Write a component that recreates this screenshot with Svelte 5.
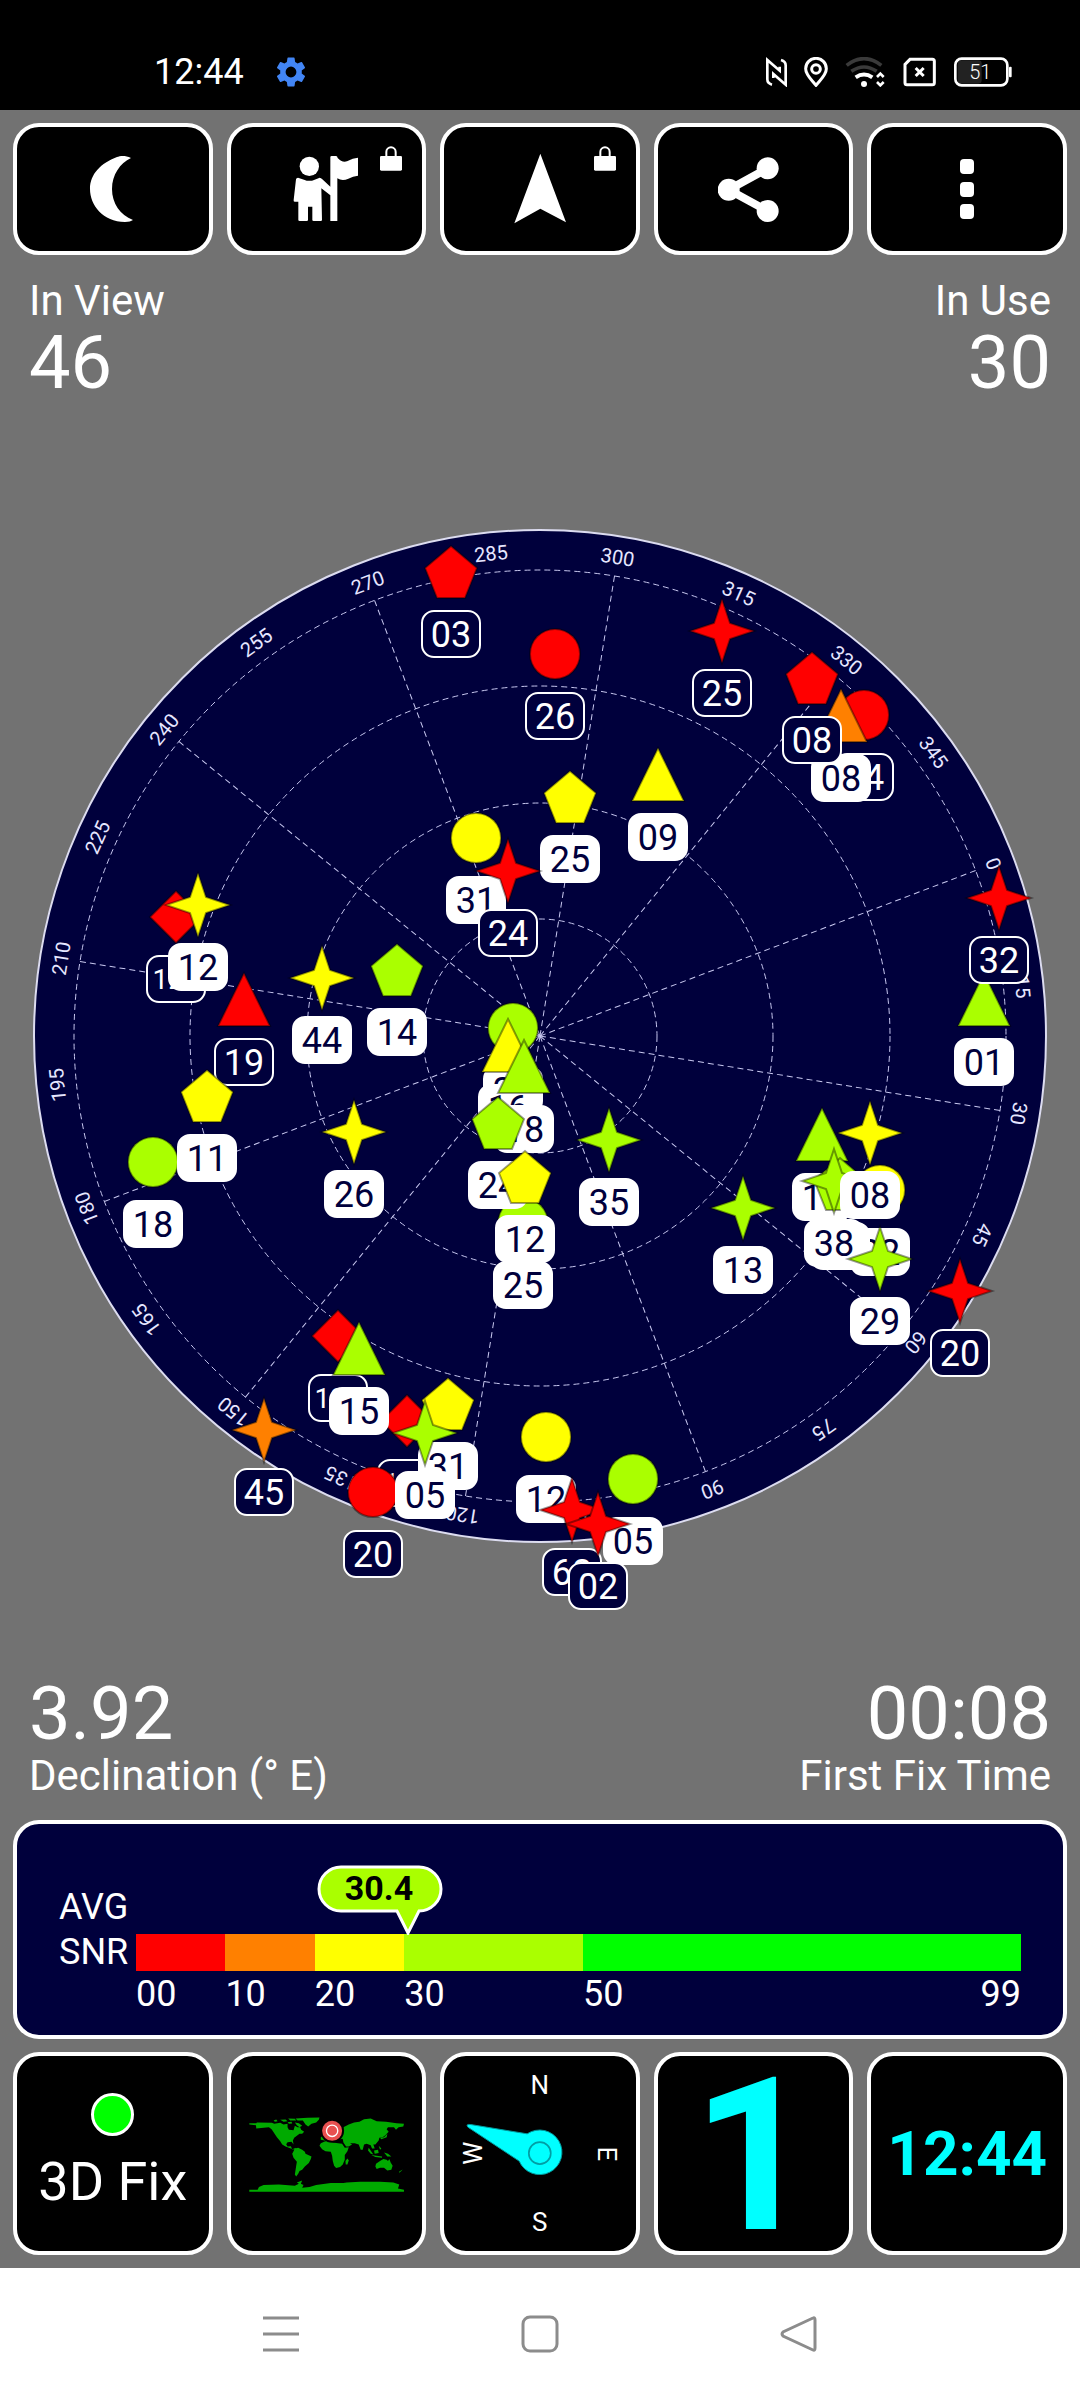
<script lang="ts">
  type Shape = 'circle' | 'triangle' | 'pentagon' | 'star' | 'diamond'
  type Satellite = { id: string; shape: Shape; color: string; x: number; y: number; used: boolean }

  const RED = '#ff0000'
  const ORANGE = '#ff8000'
  const YELLOW = '#ffff00'
  const LIME = '#aaff00'
  const GREEN = '#00ff00'

  // compass heading offset of the sky plot, degrees
  const heading = 69.2
  const ringRadii = [117, 233, 350, 466]
  const spokes = Array.from({ length: 12 }, (_, i) => i * 30)
  const azimuths = Array.from({ length: 24 }, (_, i) => i * 15)

  const points: Record<string, string> = {
    triangle: '0,-27 26,26 -26,26',
    pentagon: '0,-26 26,-4 14,26 -14,26 -26,-4',
    star: '0,-32 8,-8 32,0 8,8 0,32 -8,8 -32,0 -8,-8',
    diamond: '0,-26 26,0 0,26 -26,0'
  }

  function sat(id: string, shape: Shape, color: string, x: number, y: number, used = true): Satellite {
    return { id, shape, color, x, y, used }
  }

  // later satellites are drawn over earlier ones
  const satellites: Satellite[] = [
    sat('03', 'pentagon', RED, -89, -464, false),
    sat('26', 'circle', RED, 15, -382, false),
    sat('25', 'star', RED, 182, -405, false),
    sat('14', 'circle', RED, 324, -321, false),
    sat('08', 'triangle', ORANGE, 301, -320),
    sat('08', 'pentagon', RED, 272, -358, false),
    sat('25', 'pentagon', YELLOW, 30, -239),
    sat('09', 'triangle', YELLOW, 118, -261),
    sat('31', 'circle', YELLOW, -64, -198),
    sat('24', 'star', RED, -32, -165, false),
    sat('01', 'triangle', LIME, 444, -36),
    sat('32', 'star', RED, 459, -138, false),
    sat('14', 'pentagon', LIME, -143, -66),
    sat('44', 'star', YELLOW, -218, -58),
    sat('123', 'diamond', RED, -364, -119, false),
    sat('12', 'star', YELLOW, -342, -131),
    sat('19', 'triangle', RED, -296, -36, false),
    sat('18', 'circle', LIME, -387, 126),
    sat('11', 'pentagon', YELLOW, -333, 60),
    sat('26', 'star', YELLOW, -186, 96),
    sat('29', 'circle', LIME, -27, -8),
    sat('16', 'triangle', YELLOW, -32, 10),
    sat('18', 'triangle', LIME, -16, 31),
    sat('25', 'circle', LIME, -17, 187),
    sat('24', 'pentagon', LIME, -42, 87),
    sat('12', 'pentagon', YELLOW, -15, 141),
    sat('35', 'star', LIME, 69, 104),
    sat('13', 'star', LIME, 203, 172),
    sat('15', 'triangle', LIME, 282, 99),
    sat('22', 'circle', YELLOW, 340, 154),
    sat('33', 'pentagon', LIME, 300, 148),
    sat('38', 'star', LIME, 294, 145),
    sat('08', 'star', YELLOW, 330, 97),
    sat('29', 'star', LIME, 340, 223),
    sat('20', 'star', RED, 420, 255, false),
    sat('136', 'diamond', RED, -133, 385, false),
    sat('126', 'diamond', RED, -202, 300, false),
    sat('15', 'triangle', LIME, -181, 313),
    sat('31', 'pentagon', YELLOW, -92, 368),
    sat('20', 'circle', RED, -167, 456, false),
    sat('05', 'star', LIME, -115, 397),
    sat('45', 'star', ORANGE, -276, 394, false),
    sat('12', 'circle', YELLOW, 6, 401),
    sat('05', 'circle', LIME, 93, 443),
    sat('68', 'star', RED, 32, 474, false),
    sat('02', 'star', RED, 58, 488, false)
  ]

  const snrMax = 99
  const avgSnr = 30.4
  const bands = [
    { from: 0, to: 10, color: RED },
    { from: 10, to: 20, color: ORANGE },
    { from: 20, to: 30, color: YELLOW },
    { from: 30, to: 50, color: LIME },
    { from: 50, to: 99, color: GREEN }
  ]

  const pad = (n: number) => String(n).padStart(2, '0')

  let clock = $state('12:44')
</script>

{#snippet lock()}
  <svg class="lock" viewBox="303 48 66 75" aria-hidden="true">
    <path d="M322 80V66a14 14 0 0 1 28 0V80" fill="none" stroke="#fff" stroke-width="6" />
    <rect x="303" y="78" width="66" height="44" rx="4" fill="#fff" />
  </svg>
{/snippet}

<div class="screen">
  <header class="status">
    <time>{clock}</time>
    <svg class="gear" viewBox="2 2 20 20" aria-hidden="true">
      <path fill="#4285f4" d="M19.14 12.94c.04-.3.06-.61.06-.94 0-.32-.02-.64-.07-.94l2.03-1.58a.49.49 0 0 0 .12-.61l-1.92-3.32a.49.49 0 0 0-.59-.22l-2.39.96c-.5-.38-1.03-.7-1.62-.94L14.4 2.81a.48.48 0 0 0-.48-.41h-3.84a.47.47 0 0 0-.47.41l-.36 2.54c-.59.24-1.13.57-1.62.94l-2.39-.96a.48.48 0 0 0-.59.22L2.74 8.87a.47.47 0 0 0 .12.61l2.03 1.58c-.05.3-.09.63-.09.94s.02.64.07.94l-2.03 1.58a.49.49 0 0 0-.12.61l1.92 3.32c.12.22.37.29.59.22l2.39-.96c.5.38 1.03.7 1.62.94l.36 2.54c.05.24.24.41.48.41h3.84c.24 0 .44-.17.47-.41l.36-2.54c.59-.24 1.13-.56 1.62-.94l2.39.96c.22.08.47 0 .59-.22l1.92-3.32a.47.47 0 0 0-.12-.61l-2.01-1.58zM12 15.6A3.6 3.6 0 1 1 12 8.4a3.6 3.6 0 0 1 0 7.2z" />
    </svg>
    <div class="indicators">
      <svg width="22" height="30" viewBox="75 51 66 90" aria-hidden="true">
        <path d="M96 134Q82 130 82 118V60L119 92V80M123 60Q137 64 137 76V134L100 102V114" fill="none" stroke="#fff" stroke-width="8" />
      </svg>
      <svg width="24" height="30" viewBox="195 51 72 90" aria-hidden="true">
        <path d="M231 136C216 117 200 104 200 86a31 31 0 0 1 62 0C262 104 246 117 231 136Z" fill="none" stroke="#fff" stroke-width="9" />
        <circle cx="231" cy="87" r="13" fill="none" stroke="#fff" stroke-width="9" />
      </svg>
      <svg width="41" height="30" viewBox="327 51 123 90" aria-hidden="true">
        <path d="M332 76Q384 36 436 76M346 94Q384 68 422 94" fill="none" stroke="#3a3a3a" stroke-width="11" />
        <path d="M359 112Q384 95 409 112" fill="none" stroke="#fff" stroke-width="12" />
        <circle cx="384" cy="132" r="9" fill="#fff" />
        <path d="M423 111L433 101L443 111M423 126L433 136L443 126" fill="none" stroke="#fff" stroke-width="8" />
      </svg>
      <svg width="33" height="30" viewBox="490 51 99 90" aria-hidden="true">
        <path d="M511 58H578Q584 58 584 64V128Q584 134 578 134H502Q496 134 496 128V73Z" fill="none" stroke="#fff" stroke-width="9" />
        <path d="M528 84L552 108M552 84L528 108" stroke="#fff" stroke-width="9" />
      </svg>
      <svg width="59" height="30" viewBox="636 51 177 90" role="img" aria-label="Battery">
        <rect x="650" y="61" width="72" height="70" rx="10" fill="#222" />
        <rect x="643" y="56" width="156" height="80" rx="19" fill="none" stroke="#fff" stroke-width="8" />
        <rect x="804" y="80" width="8" height="32" rx="3" fill="#fff" />
        <text class="battery" x="718" y="117">51</text>
      </svg>
    </div>
  </header>

  <main>
    <nav class="tiles toolbar">
      <button class="tile" aria-label="Night mode">
        <svg class="icon" viewBox="0 0 72 72">
          <path d="M54 5C48 2 43 3 40 4C24 10 13 21 13 36C13 52 26 69 48 69C52 69 54 68 56 67C43 62 35 50 35 36C35 22 43 10 54 5Z" />
        </svg>
      </button>
      <button class="tile" aria-label="Waypoints">
        <svg class="icon" viewBox="33 69 216 216">
          <circle cx="91" cy="109" r="29" />
          <path d="M57 143L75 149Q91 156 107 149L122 143Q126 143 130 148L154 170V82Q154 78 158 78H171Q175 78 176 84Q188 98 204 94Q222 84 237 83V137Q222 138 208 146Q190 154 175 145V273H154V196L127 175L129 270Q129 273 125 273H104Q100 273 100 270V230H87V270Q87 273 83 273H62Q58 273 58 270V215H47Q43 215 44 210L51 148Q52 143 57 143Z" />
        </svg>
        {@render lock()}
      </button>
      <button class="tile" aria-label="Navigate">
        <svg class="icon" viewBox="672 69 216 216">
          <path d="M781 71L858 277L781 236L703 280Z" />
        </svg>
        {@render lock()}
      </button>
      <button class="tile" aria-label="Share">
        <svg class="icon" viewBox="1312 69 216 216">
          <circle cx="1344" cy="179" r="33" />
          <circle cx="1461" cy="115" r="33" />
          <circle cx="1461" cy="243" r="33" />
          <path d="M1461 115L1344 179L1461 243" fill="none" stroke="#fff" stroke-width="24" />
        </svg>
      </button>
      <button class="tile" aria-label="More options">
        <svg class="icon" viewBox="0 0 72 72">
          <rect x="29" y="6" width="14" height="15" rx="4" />
          <rect x="29" y="29" width="14" height="15" rx="4" />
          <rect x="29" y="51" width="14" height="15" rx="4" />
        </svg>
      </button>
    </nav>

    <dl class="stats">
      <div>
        <dt>In View</dt>
        <dd>46</dd>
      </div>
      <div>
        <dt>In Use</dt>
        <dd>30</dd>
      </div>
    </dl>

    <svg class="sky" viewBox="-540 -636 1080 1277" role="img" aria-label="Satellite sky plot">
      <circle r="506" fill="#00003c" stroke="#dcdcf0" stroke-width="2" />
      <g class="grid">
        {#each ringRadii as r}
          <circle {r} />
        {/each}
        {#each spokes as angle}
          <line x1="0" y1="0" x2="0" y2="-466" transform="rotate({angle + heading})" />
        {/each}
      </g>
      {#each azimuths as angle}
        <text class="azimuth" y="-478" transform="rotate({angle + heading})">{angle}</text>
      {/each}
      {#each satellites as s}
        <g class="sat" class:used={s.used} transform="translate({s.x} {s.y})">
          {#if s.shape === 'circle'}
            <circle class="mark" r="25" fill={s.color} />
          {:else}
            <polygon class="mark" points={points[s.shape]} fill={s.color} />
          {/if}
          <rect class="plate" x="-29" y="39" width="58" height="46" rx="12" />
          <text class="id" class:long={s.id.length > 2} y={s.id.length > 2 ? 72 : 75}>{s.id}</text>
        </g>
      {/each}
    </svg>

    <dl class="stats below">
      <div>
        <dt>Declination (° E)</dt>
        <dd>3.92</dd>
      </div>
      <div>
        <dt>First Fix Time</dt>
        <dd>00:08</dd>
      </div>
    </dl>

    <section class="snr">
      <div class="snr-label">AVG<br />SNR</div>
      <div class="scale">
        <div class="bands">
          {#each bands as band}
            <div class="band" style="flex-grow: {band.to - band.from}; background: {band.color}"></div>
          {/each}
        </div>
        <div class="ticks">
          {#each bands as band}
            <div class="tick" style="flex-grow: {band.to - band.from}">
              <span>{pad(band.from)}</span>
              {#if band.to === snrMax}<span>{band.to}</span>{/if}
            </div>
          {/each}
        </div>
        <div class="bubble" style="left: {(avgSnr / snrMax) * 100}%">
          <svg viewBox="0 0 126 70" aria-hidden="true">
            <path d="M24 2H102A22 22 0 0 1 102 46L91 68L80 46H24A22 22 0 0 1 24 2Z" fill="#aaff00" stroke="#fff" stroke-width="3" />
            <text x="62" y="35">{avgSnr}</text>
          </svg>
        </div>
      </div>
    </section>

    <nav class="tiles dashboard">
      <button class="tile fix">
        <span class="led"></span>
        3D Fix
      </button>
      <button class="tile" aria-label="World map">
        <svg viewBox="92 18 576 585">
          <g fill="#00aa00">
            <path d="M147 220H168L170 218L215 219L222 222L240 219L250 224L262 222L262 232L266 240L280 241L284 228L292 232L300 232L303 240L312 246L306 252L298 252L290 258L282 264L278 272L280 284L274 276L262 277L258 283L262 290L272 289L276 298L288 294L284 300L272 296L256 290L246 284L240 274L230 262L222 250L214 238L206 232L190 234L168 236L167 226L147 224Z" />
            <path d="M284 296L294 294L306 300L314 306L316 312L334 320L332 328L326 340L314 350L306 360L298 364L294 372L288 380L284 374L288 348L290 336L280 324L276 312L280 304Z" />
            <path d="M286 206L322 204L358 203L356 210L348 218L334 222L324 230L316 224L308 212L292 212Z" />
            <path d="M220 212L228 209L232 214L224 216ZM240 210L256 209L262 214L250 216ZM264 206L284 207L288 212L270 212ZM284 218L296 220L306 228L298 232L290 226ZM262 217L274 216L276 221L266 222Z" />
            <path d="M372 276L384 272L392 270L398 278L414 280L426 282L434 294L446 292L442 304L434 316L434 330L428 344L420 352L408 355L402 348L398 334L396 318L392 306L376 304L366 298L358 288L362 280Z" />
            <path d="M442 326L446 332L442 344L437 344L436 334Z" />
            <path d="M430 232L446 224L462 218L478 216L492 208L512 206L530 214L558 216L590 220L612 222L610 230L596 232L588 240L582 232L564 232L560 238L566 246L556 256L548 262L538 264L536 272L526 284L520 284L524 296L516 296L512 286L500 282L492 284L488 300L482 300L476 284L464 280L450 280L456 284L446 290L438 290L430 278L428 268L424 262Z" />
            <path d="M362 262L374 254L380 246L396 246L420 246L430 252L430 266L414 270L398 268L388 266L374 272L362 270Z" />
            <path d="M506 294L516 308L520 314L512 312L504 302ZM522 302L534 300L536 310L524 312ZM536 288L544 296L540 300ZM514 316L530 318L546 320V324L526 322ZM552 308L564 312L574 320L562 320ZM540 264L552 262L562 252L560 262L544 268Z" />
            <path d="M528 342L540 334L550 328L560 330L564 334L568 328L572 338L578 348L574 360L562 362L552 354L540 354L530 358L526 350Z" />
            <path d="M597 366L608 359L604 364L598 369Z" />
            <path d="M147 420H172L176 412L190 406L236 404L284 408L296 402L290 398L306 392L302 402L310 406L306 414L328 412L348 406L392 400L430 400L440 398L480 396L540 396L580 398L598 404L594 416L612 420V426H147Z" />
          </g>
          <circle cx="396" cy="243" r="36" fill="#000" />
          <circle cx="396" cy="243" r="30" fill="#e85050" />
          <circle cx="396" cy="243" r="17" fill="none" stroke="#fff" stroke-width="4" />
        </svg>
      </button>
      <button class="tile" aria-label="Compass">
        <svg viewBox="732 18 576 585">
          <path d="M982 252L812 224Q796 222 804 232L958 334A67 67 0 1 0 982 252Z" fill="#00ffff" stroke="#00999c" stroke-width="3" />
          <circle cx="1020" cy="310" r="33" fill="none" stroke="#009ea4" stroke-width="5" />
          <text class="cardinal" x="1020" y="133">N</text>
          <text class="cardinal" x="1020" y="543">S</text>
          <text class="cardinal" transform="translate(1194 312) rotate(90)">E</text>
          <text class="cardinal" transform="translate(846 310) rotate(-90)">W</text>
        </svg>
      </button>
      <button class="tile speed">1</button>
      <button class="tile clock">{clock}</button>
    </nav>
  </main>

  <footer class="system">
    <button aria-label="Recent apps">
      <svg viewBox="0 0 36 36"><path d="M0 2H36M0 18H36M0 34H36" /></svg>
    </button>
    <button aria-label="Home">
      <svg viewBox="0 0 36 36"><rect x="1" y="1" width="34" height="34" rx="7" /></svg>
    </button>
    <button aria-label="Back">
      <svg viewBox="0 0 36 36"><path d="M32 2Q34 1 34 4V32Q34 35 32 34L2 20Q0 18 2 16Z" /></svg>
    </button>
  </footer>
</div>

<style>
  :global(body) {
    margin: 0;
    background: #fff;
  }

  .screen {
    font-family: Roboto, 'Liberation Sans', sans-serif;
    color: #fff;
    background: #727272;
  }

  button {
    margin: 0;
    padding: 0;
    font: inherit;
    color: inherit;
    cursor: pointer;
  }

  svg {
    display: block;
  }

  .status {
    display: flex;
    align-items: center;
    box-sizing: border-box;
    height: 110px;
    padding: 34px 68px 0 154px;
    background: #000;
    font-size: 36px;
  }

  .gear {
    width: 30px;
    height: 30px;
    margin-left: 32px;
  }

  .indicators {
    display: flex;
    gap: 17px;
    margin-left: auto;
  }

  .battery {
    font-size: 60px;
    font-weight: 300;
    fill: #fff;
    text-anchor: middle;
  }

  main {
    padding: 13px 0;
  }

  .tiles {
    display: grid;
    grid-template-columns: repeat(5, 1fr);
    gap: 14px;
    padding: 0 13px;
  }

  .tile {
    position: relative;
    display: flex;
    align-items: center;
    justify-content: center;
    box-sizing: border-box;
    min-width: 0;
    border: 4px solid #fff;
    border-radius: 26px;
    background: #000;
  }

  .toolbar .tile {
    height: 132px;
  }

  .icon {
    width: 72px;
    height: 72px;
    fill: #fff;
  }

  .lock {
    position: absolute;
    top: 19px;
    right: 20px;
    width: 22px;
    height: 25px;
  }

  .stats {
    display: flex;
    justify-content: space-between;
    margin: 0;
    padding: 21px 29px 0;
  }

  .stats div {
    display: flex;
    flex-direction: column;
  }

  .stats div:last-child {
    text-align: right;
  }

  .stats.below {
    padding: 0 29px 19px;
  }

  .stats.below div {
    flex-direction: column-reverse;
  }

  dt {
    font-size: 42px;
    line-height: 50px;
  }

  dd {
    margin: 0;
    font-size: 74px;
    line-height: 74px;
  }

  .sky {
    width: 100%;
    overflow: visible;
  }

  .grid {
    fill: none;
    stroke: #c8c8f0;
    stroke-width: 1;
    stroke-dasharray: 6 4;
  }

  .azimuth {
    font-size: 20px;
    fill: #e6e6ff;
    text-anchor: middle;
  }

  .mark {
    stroke: rgba(0, 0, 0, 0.4);
    stroke-width: 2;
  }

  .plate {
    fill: #00003c;
    stroke: #fff;
    stroke-width: 2;
  }

  .id {
    font-size: 36px;
    fill: #fff;
    text-anchor: middle;
  }

  .id.long {
    font-size: 28px;
  }

  .used .plate {
    fill: #fff;
  }

  .used .id {
    fill: #00003c;
  }

  .snr {
    display: flex;
    margin: 0 13px 13px;
    padding: 61px 42px 21px;
    border: 4px solid #fff;
    border-radius: 26px;
    background: #00003c;
    font-size: 36px;
  }

  .snr-label {
    width: 77px;
    line-height: 45px;
  }

  .scale {
    position: relative;
    flex: 1;
    margin-top: 49px;
  }

  .bands,
  .ticks {
    display: flex;
  }

  .band {
    flex-basis: 0;
    height: 37px;
  }

  .ticks {
    margin-top: 3px;
    line-height: 40px;
  }

  .tick {
    display: flex;
    flex-basis: 0;
    justify-content: space-between;
  }

  .bubble {
    position: absolute;
    bottom: 100%;
  }

  .bubble svg {
    width: 126px;
    margin-left: -91px;
    margin-bottom: -1px;
  }

  .bubble text {
    font-size: 34px;
    font-weight: 700;
    text-anchor: middle;
  }

  .dashboard .tile {
    height: 203px;
  }

  .dashboard svg {
    width: 100%;
  }

  .cardinal {
    font-size: 78px;
    fill: #fff;
    text-anchor: middle;
  }

  .dashboard .fix {
    flex-direction: column;
    gap: 14px;
    font-size: 54px;
    line-height: 64px;
  }

  .led {
    box-sizing: border-box;
    width: 43px;
    height: 43px;
    border: 3px solid #fff;
    border-radius: 50%;
    background: #00ff00;
  }

  .dashboard .speed {
    padding-top: 4px;
    color: #00ffff;
    font-size: 214px;
    font-weight: 700;
    line-height: 195px;
  }

  .dashboard .clock {
    color: #00ffff;
    font-size: 62px;
    font-weight: 700;
  }

  .system {
    display: grid;
    grid-template-columns: repeat(3, 1fr);
    height: 132px;
    padding: 0 14%;
    background: #fff;
  }

  .system button {
    display: flex;
    align-items: center;
    justify-content: center;
    border: none;
    background: none;
  }

  .system svg {
    width: 36px;
    height: 36px;
    fill: none;
    stroke: #8c8c8c;
    stroke-width: 3;
    overflow: visible;
  }
</style>
